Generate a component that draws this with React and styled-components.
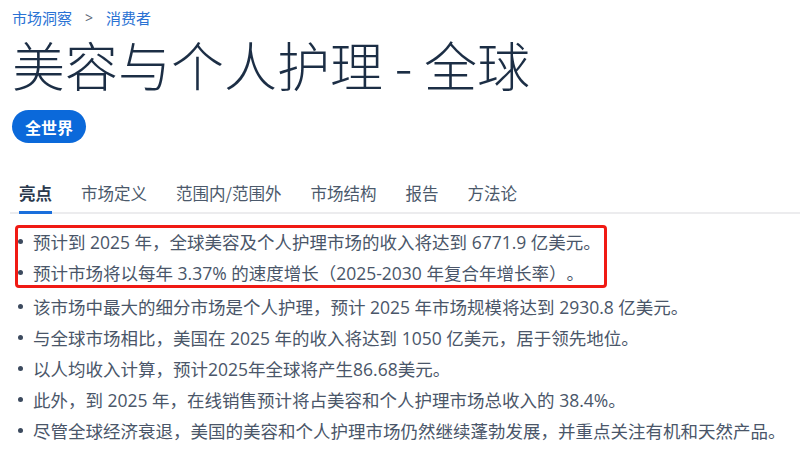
import React from "react";
import styled, { createGlobalStyle } from "styled-components";

const GlobalStyle = createGlobalStyle`
  body {
    margin: 0;
    background: #ffffff;
    font-family: "Open Sans", "Noto Sans CJK SC", sans-serif;
    text-spacing-trim: space-all;
  }
`;

const StyledPage = styled.div`
  padding: 8px 0 0 12px;
  display: flex;
  flex-direction: column;
  align-items: flex-start;
`;

const StyledCrumbs = styled.nav`
  display: flex;
  align-items: center;
  height: 20px;
  font-size: 15px;
  line-height: 20px;
  color: #2a72d4;

  span.sep {
    color: #5b6776;
    margin: 0 13px;
    font-size: 14px;
  }
`;

const StyledTitle = styled.h1`
  margin: 6px 0 0;
  font-family: "Noto Sans CJK SC", "Open Sans", sans-serif;
  font-size: 53px;
  font-weight: 300;
  line-height: 60px;
  color: #1c2e45;
`;

const StyledBadge = styled.span`
  margin-top: 16px;
  height: 33px;
  padding: 0 13px;
  display: inline-flex;
  align-items: center;
  border-radius: 17px;
  background: #0b69da;
  color: #ffffff;
  font-family: "Noto Sans CJK SC", sans-serif;
  font-size: 16px;
  font-weight: 700;
`;

const StyledTabs = styled.div`
  align-self: stretch;
  margin: 38px 0 0 -2px;
  padding-left: 9px;
  display: flex;
  gap: 29px;
  border-bottom: 2px solid #ececee;
`;

const StyledTab = styled.div`
  font-family: "Noto Sans CJK SC", sans-serif;
  font-size: 16.5px;
  line-height: 24px;
  padding-bottom: 6px;
  color: ${(p) => (p.active ? "#2b3a4e" : "#4b596b")};
  font-weight: ${(p) => (p.active ? 700 : 400)};
  border-bottom: 3px solid ${(p) => (p.active ? "#1a6fdc" : "transparent")};
  margin-bottom: -2px;
`;

const StyledList = styled.div`
  margin-top: 11px;
  display: flex;
  flex-direction: column;
  gap: 5px;
`;

const StyledHighlight = styled.div`
  margin-left: 3px;
  width: 586px;
  border: 3px solid #f01a14;
  border-radius: 4px;
  display: flex;
  flex-direction: column;
  gap: 5px;
`;

const StyledItem = styled.div`
  display: flex;
  align-items: center;
  height: 26px;
  padding-left: ${(p) => (p.boxed ? "0" : "6px")};
  font-size: 17.5px;
  color: #4a5669;
  white-space: nowrap;
`;

const StyledDot = styled.span`
  width: 5px;
  height: 5px;
  border-radius: 50%;
  background: #3c4a5e;
  margin-right: 10px;
  flex-shrink: 0;
`;

const tabs = ["亮点", "市场定义", "范围内/范围外", "市场结构", "报告", "方法论"];

const highlighted = [
  "预计到 2025 年，全球美容及个人护理市场的收入将达到 6771.9 亿美元。",
  "预计市场将以每年 3.37% 的速度增长（2025-2030 年复合年增长率）。",
];

const points = [
  "该市场中最大的细分市场是个人护理，预计 2025 年市场规模将达到 2930.8 亿美元。",
  "与全球市场相比，美国在 2025 年的收入将达到 1050 亿美元，居于领先地位。",
  "以人均收入计算，预计2025年全球将产生86.68美元。",
  "此外，到 2025 年，在线销售预计将占美容和个人护理市场总收入的 38.4%。",
  "尽管全球经济衰退，美国的美容和个人护理市场仍然继续蓬勃发展，并重点关注有机和天然产品。",
];

const App = () => {
  return (
    <StyledPage>
      <GlobalStyle />
      <StyledCrumbs>
        <span>市场洞察</span>
        <span className="sep">&gt;</span>
        <span>消费者</span>
      </StyledCrumbs>
      <StyledTitle>美容与个人护理 - 全球</StyledTitle>
      <StyledBadge>全世界</StyledBadge>
      <StyledTabs>
        {tabs.map((t, i) => (
          <StyledTab key={t} active={i === 0}>
            {t}
          </StyledTab>
        ))}
      </StyledTabs>
      <StyledList>
        <StyledHighlight>
          {highlighted.map((t) => (
            <StyledItem key={t} boxed>
              <StyledDot />
              {t}
            </StyledItem>
          ))}
        </StyledHighlight>
        {points.map((t) => (
          <StyledItem key={t}>
            <StyledDot />
            {t}
          </StyledItem>
        ))}
      </StyledList>
    </StyledPage>
  );
};

export default App;
